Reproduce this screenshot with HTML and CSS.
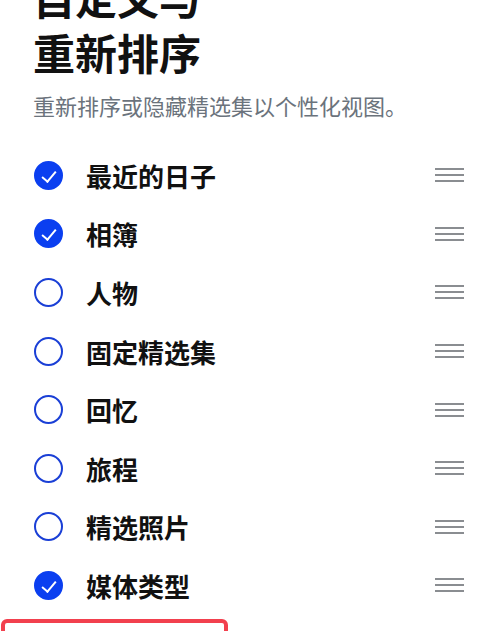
FILE: index.html
```html
<!DOCTYPE html>
<html lang="zh-CN">
<head>
<meta charset="utf-8">
<title>自定义与重新排序</title>
<link rel="stylesheet" href="styles.css">
</head>
<body>
  <div class="page">
    <h1 class="title">自定义与<br>重新排序</h1>
    <p class="subtitle">重新排序或隐藏精选集以个性化视图。</p>

    <ul class="list">
      <li class="row on"><span class="check"></span><span class="label">最近的日子</span><span class="grip"></span></li>
      <li class="row on"><span class="check"></span><span class="label">相簿</span><span class="grip"></span></li>
      <li class="row"><span class="check"></span><span class="label">人物</span><span class="grip"></span></li>
      <li class="row"><span class="check"></span><span class="label">固定精选集</span><span class="grip"></span></li>
      <li class="row"><span class="check"></span><span class="label">回忆</span><span class="grip"></span></li>
      <li class="row"><span class="check"></span><span class="label">旅程</span><span class="grip"></span></li>
      <li class="row"><span class="check"></span><span class="label">精选照片</span><span class="grip"></span></li>
      <li class="row on"><span class="check"></span><span class="label">媒体类型</span><span class="grip"></span></li>
    </ul>

    <div class="marked"></div>
  </div>
</body>
</html>
```

FILE: styles.css
```css
html, body { margin: 0; padding: 0; background: #fff; }

body  { font-family: "Noto Sans CJK SC", "Noto Sans", sans-serif; color: #111; }

/* padding-top 1px keeps the title's negative margin inside the page */
.page { padding: 1px 36px 0 33px; }

.title    { margin: -32px 0 0 0; font-size: 42px; line-height: 55px; font-weight: 700; }
.subtitle { margin: 11px 0 0 0; font-size: 22px; line-height: 30px; color: #6b737c; }

.list { list-style: none; margin: 26px 0 0 0; padding: 0; }
.row  { display: flex; align-items: center; height: 58.6px; }

.check { width: 29px; height: 29px; border-radius: 50%; box-sizing: border-box;
         border: 2px solid #1a3fd6; flex: none; position: relative; margin-left: 1px; }
.row.on .check { background: #0b3ff0; border-color: #0b3ff0; }
.row.on .check::after { content: ""; position: absolute; left: 9px; top: 5px; width: 6px; height: 12px;
                        border: solid #fff; border-width: 0 2px 2px 0; transform: rotate(40deg); }

.label { margin-left: 23px; font-size: 26px; font-weight: 700; flex: 1; color: #111; }

.grip  { width: 29px; height: 14px; flex: none;
         background: linear-gradient(#8a8d91, #8a8d91) 0 0 / 100% 2px no-repeat,
                     linear-gradient(#8a8d91, #8a8d91) 0 6px / 100% 2px no-repeat,
                     linear-gradient(#8a8d91, #8a8d91) 0 12px / 100% 2px no-repeat; }

.marked { margin: 4px 0 0 -32px; width: 227px; height: 40px; box-sizing: border-box;
          border: 4px solid #f2404e; border-radius: 6px; }
```
